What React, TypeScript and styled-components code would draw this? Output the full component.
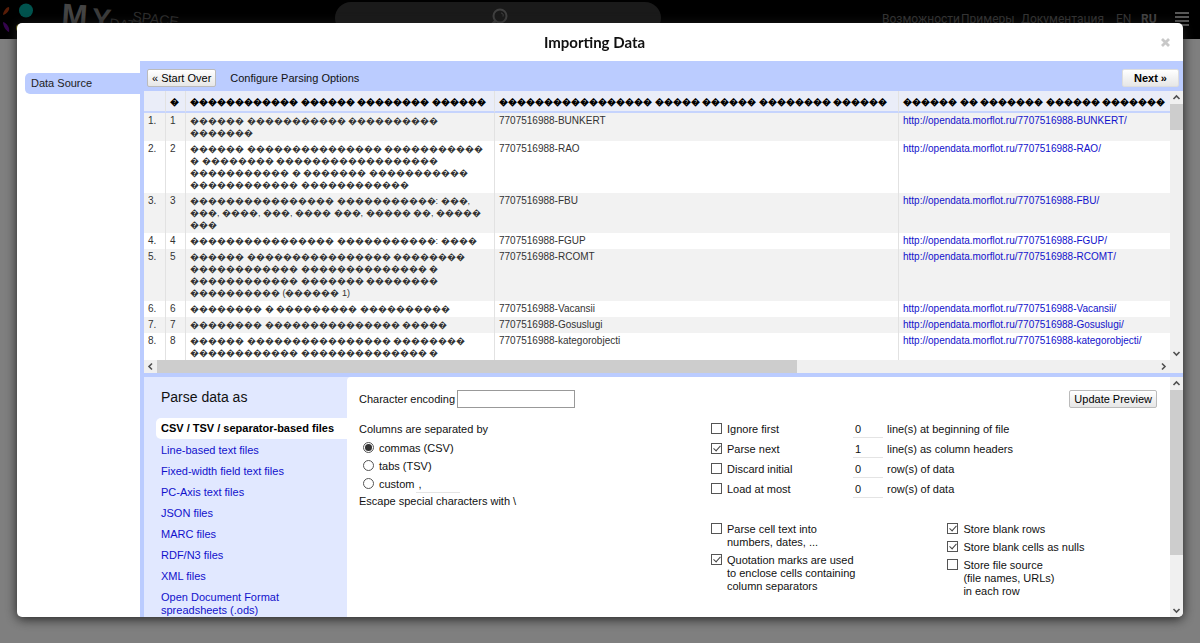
import React from "react";
import styled, { createGlobalStyle, css } from "styled-components";

const GlobalStyle = createGlobalStyle`
  *, *::before, *::after { box-sizing: border-box; }
  html, body { margin: 0; padding: 0; background: #fff; overflow: hidden; }
  body { font: 11px/13px "Liberation Sans", Arial, sans-serif; color: #111; }
  button, input { font: inherit; color: inherit; margin: 0; }
  a { color: #11c; text-decoration: none; }
`;

/* ---------- site header behind the dialog ---------- */

const SiteHeader = styled.header`
  display: flex;
  align-items: flex-start;
  height: 39px;
  padding-right: 11px;
  background: #000;
`;

const Side = styled.div<{ $grow: number; $end?: boolean }>`
  flex: ${(p) => p.$grow} 1 0;
  min-width: 0;
  display: flex;
  justify-content: ${(p) => (p.$end ? "flex-end" : "flex-start")};
`;

const SearchBox = styled.label`
  position: relative;
  flex: 0 0 326px;
  height: 32px;
  margin: 2px 0 0 11px;
  border-radius: 16px;
  background: #343434;
  display: flex;
  justify-content: center;
  svg { margin-top: 6px; }
`;

const SearchInput = styled.input`
  position: absolute;
  inset: 0;
  width: 100%;
  border: 0;
  padding: 0 16px;
  background: transparent;
`;

const SiteNav = styled.nav`
  display: flex;
  padding-top: 10px;
  font: 12px/18px Roboto, sans-serif;
  white-space: nowrap;
`;

const NavLink = styled.a<{ $w: number; $strong?: boolean }>`
  width: ${(p) => p.$w}px;
  color: ${(p) => (p.$strong ? "#888" : "#6a6a6a")};
  font-weight: ${(p) => (p.$strong ? 700 : 400)};
`;

const MenuButton = styled.button`
  border: 0;
  padding: 0;
  background: none;
  line-height: 0;
`;

const Backdrop = styled.div`
  position: fixed;
  inset: 0;
  padding: 23px 17px 26px;
  display: flex;
  background: rgba(0, 0, 0, 0.5);
`;

/* ---------- dialog ---------- */

const Dialog = styled.section`
  flex: 1;
  min-width: 0;
  display: flex;
  flex-direction: column;
  overflow: hidden;
  border-radius: 5px;
  background: #fff;
  box-shadow: 0 2px 12px #222;
`;

const TitleBar = styled.div`
  flex: 0 0 38px;
  display: flex;
  align-items: center;
  padding: 0 12px;
`;

const Title = styled.h1`
  flex: 1;
  margin: 0;
  text-align: center;
  font: 700 15px/20px Lato, sans-serif;
`;

const CloseButton = styled.button`
  width: 11px;
  border: 0;
  padding: 0;
  background: none;
  line-height: 0;
`;

const DialogBody = styled.div`
  flex: 1;
  min-height: 0;
  display: flex;
`;

const Steps = styled.nav`
  flex: 0 0 123px;
  padding: 12px 0 0 8px;
`;

const Step = styled.a`
  display: block;
  padding: 4px 6px;
  border-radius: 5px 0 0 5px;
  background: #bcf;
  color: #222;
`;

const Workspace = styled.div`
  flex: 1;
  min-width: 0;
  display: flex;
  flex-direction: column;
  padding-left: 4px;
  background: #bcf;
`;

const Toolbar = styled.div`
  flex: 0 0 30px;
  display: flex;
  align-items: center;
  gap: 14px;
  padding: 4px 4px 0 3px;
`;

const ToolbarText = styled.span`
  flex: 1;
`;

const Button = styled.button<{ $primary?: boolean }>`
  height: 18px;
  padding: 0 ${(p) => (p.$primary ? 11 : 4)}px;
  border: 1px solid ${(p) => (p.$primary ? "#ddd" : "#bbb")};
  border-radius: 2px;
  background: linear-gradient(#fff, #e6e6e6);
  font-weight: ${(p) => (p.$primary ? 700 : 400)};
  line-height: 16px;
  color: #000;
  white-space: nowrap;
`;

/* ---------- scroll bars ---------- */

const Bar = styled.div<{ $horizontal?: boolean }>`
  display: flex;
  flex-direction: ${(p) => (p.$horizontal ? "row" : "column")};
  background: #f0f0f0;
  ${(p) => (p.$horizontal ? css`height: 13px; padding-right: 13px;` : css`width: 13px;`)}
  flex: none;
`;

const Arrow = styled.span`
  flex: 0 0 13px;
  height: 13px;
  line-height: 0;
`;

const Track = styled.div<{ $horizontal?: boolean }>`
  flex: 1;
  display: flex;
  flex-direction: ${(p) => (p.$horizontal ? "row" : "column")};
`;

const Thumb = styled.div<{ $size: string }>`
  flex: 0 0 ${(p) => p.$size};
  background: #cdcdcd;
`;

const turns = { up: 0, right: 90, down: 180, left: 270 };

function Chevron({ to }: { to: keyof typeof turns }) {
  return (
    <Arrow>
      <svg width="13" height="13" viewBox="0 0 13 13">
        <path
          d="M3.5 8 6.5 5l3 3"
          transform={`rotate(${turns[to]} 6.5 6.5)`}
          fill="none"
          stroke="#505050"
          strokeWidth="1.6"
        />
      </svg>
    </Arrow>
  );
}

function ScrollBar({ horizontal, size }: { horizontal?: boolean; size: string }) {
  return (
    <Bar $horizontal={horizontal} aria-hidden="true">
      <Chevron to={horizontal ? "left" : "up"} />
      <Track $horizontal={horizontal}>
        <Thumb $size={size} />
      </Track>
      <Chevron to={horizontal ? "right" : "down"} />
    </Bar>
  );
}

/* ---------- preview table ---------- */

const Preview = styled.div`
  flex: 282 1 0;
  min-height: 0;
  display: flex;
  flex-direction: column;
`;

const PreviewRow = styled.div`
  flex: 1;
  min-height: 0;
  display: flex;
`;

const Viewport = styled.div`
  flex: 1;
  min-width: 0;
  overflow: hidden;
  background: #fff;
`;

const Table = styled.table`
  width: 125%;
  table-layout: fixed;
  border-collapse: separate;
  border-spacing: 0;
  font-size: 10px;
  line-height: 12px;
  color: #333;

  th, td {
    padding: 2px 4px;
    border-right: 1px solid #e2e2e2;
    text-align: left;
    vertical-align: top;
    white-space: pre;
  }
  th {
    height: 22px;
    padding-top: 5px;
    border-bottom: 2px solid #c6d4fd;
    background: #eaedf8;
    color: #000;
  }
  tbody tr:nth-child(odd) { background: #f2f2f2; }
`;

const Col = styled.col<{ $w?: number }>`
  width: ${(p) => (p.$w ? `${p.$w}px` : "auto")};
`;

const Raw = styled.span<{ $lines: number }>`
  display: block;
  height: ${(p) => p.$lines * 12}px;
  font-size: 9px;
  line-height: 12px;
`;

/* Cells hold text that lost its encoding: "w6" stands for a word of six unreadable letters. */
const garbled = (pattern: string) =>
  pattern.replace(/w(\d+)/g, (_, n) => "\uFFFD".repeat(Number(n)));

function Garbled({ pattern, bold }: { pattern: string; bold?: boolean }) {
  return (
    <Raw as={bold ? "b" : "span"} $lines={pattern.split("\n").length}>
      {garbled(pattern)}
    </Raw>
  );
}

const headers = ["w1", "w12 w6 w8 w6", "w17 w5 w6 w8 w6", "w6 w2 w7 w6 w7"];

const rows: [string, string][] = [
  ["w6 w11 w10\nw7", "BUNKERT"],
  ["w6 w15 w11\nw1 w8 w18\nw11 w1 w7 w11\nw12 w12", "RAO"],
  ["w16 w11: w3,\nw3, w4, w3, w4 w3, w5 w2, w5\nw3", "FBU"],
  ["w16 w11: w4", "FGUP"],
  ["w6 w16 w8\nw12 w14 w1\nw12 w7 w8\nw10 (w6 1)", "RCOMT"],
  ["w8 w1 w9 w10", "Vacansii"],
  ["w8 w15 w5", "Gosuslugi"],
  ["w6 w16 w8\nw12 w14 w1", "kategorobjecti"],
];

/* ---------- parser options ---------- */

const Options = styled.div`
  flex: 240 1 0;
  min-height: 0;
  display: flex;
  margin-top: 4px;
  overflow: hidden;
  background: #e1e8ff;
`;

const Formats = styled.nav`
  flex: 0 0 203px;
  padding: 12px 0 0 12px;
`;

const FormatsTitle = styled.h2`
  margin: 0 0 12px 5px;
  font: 400 14px/17px "Liberation Sans", Arial, sans-serif;
`;

const Format = styled.a<{ $active?: boolean }>`
  display: block;
  padding: 4px 40px 4px 5px;
  ${(p) =>
    p.$active &&
    css`
      margin-bottom: 1px;
      padding-right: 0;
      border-radius: 5px 0 0 5px;
      background: #fff;
      color: #000;
      font-weight: 700;
    `}
`;

const Panel = styled.div`
  flex: 1;
  min-width: 0;
  padding: 12px 13px 0 12px;
  border-radius: 4px 0 0 0;
  background: #fff;
`;

const PanelTop = styled.div`
  display: flex;
  justify-content: space-between;
  align-items: center;
  height: 20px;
`;

const EncodingLabel = styled.label`
  display: flex;
  align-items: center;
  gap: 2px;
`;

const EncodingInput = styled.input`
  width: 118px;
  height: 18px;
  border: 1px solid #999;
  padding: 0 4px;
`;

const PanelGrid = styled.div`
  display: grid;
  grid-template-columns: 352fr 446fr;
  padding-top: 14px;
`;

const Separators = styled.fieldset`
  min-width: 0;
  margin: 0;
  padding: 0;
  border: 0;
  legend { padding: 0; margin-bottom: 4px; }
`;

const Choice = styled.label`
  display: flex;
  align-items: flex-start;
  gap: 5px;
  min-height: 18px;
`;

const LineInput = styled.input<{ $w: number }>`
  display: block;
  width: ${(p) => p.$w}px;
  height: 15px;
  border: 0;
  border-bottom: 1px solid #e4e4e4;
  padding: 0 2px 2px;
  background: transparent;
`;

const RadioRow = styled.div`
  display: flex;
  gap: 2px;
  height: 18px;
  padding: 2px 0 0 4px;
`;

const EscapeNote = styled.div`
  padding-top: 1px;
`;

const boxBase = css`
  appearance: none;
  flex: none;
  width: 11px;
  height: 11px;
  border: 1px solid #555;
  background: #fff;
  display: grid;
  place-items: center;
`;

const Radio = styled.input.attrs({ type: "radio" })`
  ${boxBase}
  border-radius: 50%;
  &:checked::after {
    content: "";
    width: 7px;
    height: 7px;
    border-radius: 50%;
    background: #333;
  }
`;

const Check = styled.input.attrs({ type: "checkbox" })`
  ${boxBase}
  &:checked::after {
    content: "";
    width: 4px;
    height: 7px;
    margin-bottom: 2px;
    border: solid #444;
    border-width: 0 1px 1px 0;
    transform: rotate(42deg);
  }
`;

const Limits = styled.div`
  display: grid;
  grid-template-columns: 142px 34px 1fr;
  grid-auto-rows: 20px;
  margin-bottom: 20px;
`;

const Flags = styled.div`
  display: grid;
  grid-template-columns: 53% 1fr;
`;

const FlagColumn = styled.div`
  display: flex;
  flex-direction: column;
  gap: 5px;
  white-space: pre;
  ${Choice} { min-height: 13px; }
`;

const formats = [
  "CSV / TSV / separator-based files",
  "Line-based text files",
  "Fixed-width field text files",
  "PC-Axis text files",
  "JSON files",
  "MARC files",
  "RDF/N3 files",
  "XML files",
  "Open Document Format spreadsheets (.ods)",
];

const limits = [
  { name: "Ignore first", value: "0", unit: "line(s) at beginning of file", on: false },
  { name: "Parse next", value: "1", unit: "line(s) as column headers", on: true },
  { name: "Discard initial", value: "0", unit: "row(s) of data", on: false },
  { name: "Load at most", value: "0", unit: "row(s) of data", on: false },
];

function Flag({ text, on }: { text: string; on?: boolean }) {
  return (
    <Choice>
      <Check defaultChecked={on} />
      <span>{text}</span>
    </Choice>
  );
}

function Logo() {
  return (
    <svg width="190" height="39" viewBox="0 0 190 39" role="img" aria-label="My Data Space">
      <path d="M3 15c0-3 3-8 6-8 1 3-2 7-6 8z" fill="#b03a10" />
      <circle cx="26" cy="10.5" r="7" fill="#00a79d" />
      <path d="M3 22c4 1 7 6 6 10-3-1-6-6-6-10z" fill="#6a0a9a" />
      <circle cx="20" cy="28" r="4" fill="#d8c820" />
      <g fontFamily="Liberation Sans, Arial, sans-serif">
        <text x="61" y="25" fontSize="31" fontWeight="700" fill="#888" transform="rotate(4 61 25)">M</text>
        <text x="91" y="28" fontSize="29" fontWeight="700" fill="#777" transform="rotate(5 91 28)">Y</text>
        <text x="109" y="28" fontSize="14" fill="#555" transform="rotate(5 109 28)">DATA</text>
        <text x="132" y="21" fontSize="14" fill="#5a5a5a" transform="rotate(7 132 21)">SPACE</text>
      </g>
    </svg>
  );
}

export default function App() {
  return (
    <>
      <GlobalStyle />
      <SiteHeader>
        <Side $grow={38}>
          <Logo />
        </Side>
        <SearchBox>
          <svg width="20" height="22" viewBox="0 0 20 22" fill="none" stroke="#808080">
            <circle cx="12" cy="8" r="6.5" strokeWidth="2" />
            <path d="M7.5 13 3 17.5" strokeWidth="3" />
            <path d="M13 5c2 0 2.5 1.5 2 3.5" strokeWidth="1" />
          </svg>
          <SearchInput type="text" aria-label="Search" />
        </SearchBox>
        <Side $grow={62} $end>
          <SiteNav>
            <NavLink href="#features" $w={79}>Возможности</NavLink>
            <NavLink href="#examples" $w={60}>Примеры</NavLink>
            <NavLink href="#docs" $w={95}>Документация</NavLink>
            <NavLink href="#en" $w={25}>EN</NavLink>
            <NavLink href="#ru" $w={34} $strong>RU</NavLink>
            <MenuButton aria-label="Menu">
              <svg width="14" height="14" viewBox="0 0 14 14" fill="#b0b0b0">
                <path d="M0 0h14v2H0zM0 4h14v2H0zM0 8h14v2H0zM0 12h14v2H0z" />
              </svg>
            </MenuButton>
          </SiteNav>
        </Side>
      </SiteHeader>

      <Backdrop>
        <Dialog role="dialog" aria-label="Importing Data">
          <TitleBar>
            <Title>Importing Data</Title>
            <CloseButton aria-label="Close">
              <svg width="11" height="11" viewBox="0 0 11 11" stroke="#c8c8c8" strokeWidth="2.8">
                <path d="M2 2l7 7M9 2l-7 7" />
              </svg>
            </CloseButton>
          </TitleBar>
          <DialogBody>
            <Steps>
              <Step href="#source">Data Source</Step>
            </Steps>
            <Workspace>
              <Toolbar>
                <Button>« Start Over</Button>
                <ToolbarText>Configure Parsing Options</ToolbarText>
                <Button $primary>Next »</Button>
              </Toolbar>

              <Preview>
                <PreviewRow>
                  <Viewport>
                    <Table>
                      <colgroup>
                        <Col $w={22} />
                        <Col $w={20} />
                        <Col $w={309} />
                        <Col $w={404} />
                        <Col />
                      </colgroup>
                      <thead>
                        <tr>
                          <th />
                          {headers.map((h) => (
                            <th key={h} scope="col">
                              <Garbled pattern={h} bold />
                            </th>
                          ))}
                        </tr>
                      </thead>
                      <tbody>
                        {rows.map(([name, id], i) => (
                          <tr key={id}>
                            <td>{i + 1}.</td>
                            <td>{i + 1}</td>
                            <td>
                              <Garbled pattern={name} />
                            </td>
                            <td>7707516988-{id}</td>
                            <td>
                              <a href={`#${id}`}>http://opendata.morflot.ru/7707516988-{id}/</a>
                            </td>
                          </tr>
                        ))}
                      </tbody>
                    </Table>
                  </Viewport>
                  <ScrollBar size="26px" />
                </PreviewRow>
                <ScrollBar horizontal size="64%" />
              </Preview>

              <Options>
                <Formats>
                  <FormatsTitle>Parse data as</FormatsTitle>
                  {formats.map((f, i) => (
                    <Format key={f} href="#format" $active={i === 0}>
                      {f}
                    </Format>
                  ))}
                </Formats>
                <Panel>
                  <PanelTop>
                    <EncodingLabel>
                      Character encoding
                      <EncodingInput type="text" />
                    </EncodingLabel>
                    <Button>Update Preview</Button>
                  </PanelTop>
                  <PanelGrid>
                    <Separators>
                      <legend>Columns are separated by</legend>
                      <RadioRow>
                        <Choice>
                          <Radio name="separator" defaultChecked />
                          commas (CSV)
                        </Choice>
                      </RadioRow>
                      <RadioRow>
                        <Choice>
                          <Radio name="separator" />
                          tabs (TSV)
                        </Choice>
                      </RadioRow>
                      <RadioRow>
                        <Choice>
                          <Radio name="separator" />
                          custom
                        </Choice>
                        <LineInput $w={44} defaultValue="," aria-label="Custom separator" />
                      </RadioRow>
                      <EscapeNote>Escape special characters with \</EscapeNote>
                    </Separators>
                    <div>
                      <Limits>
                        {limits.map((l) => (
                          <React.Fragment key={l.name}>
                            <Flag text={l.name} on={l.on} />
                            <LineInput $w={30} defaultValue={l.value} aria-label={l.name} />
                            <span>{l.unit}</span>
                          </React.Fragment>
                        ))}
                      </Limits>
                      <Flags>
                        <FlagColumn>
                          <Flag text={"Parse cell text into\nnumbers, dates, ..."} />
                          <Flag on text={"Quotation marks are used\nto enclose cells containing\ncolumn separators"} />
                        </FlagColumn>
                        <FlagColumn>
                          <Flag on text="Store blank rows" />
                          <Flag on text="Store blank cells as nulls" />
                          <Flag text={"Store file source\n(file names, URLs)\nin each row"} />
                        </FlagColumn>
                      </Flags>
                    </div>
                  </PanelGrid>
                </Panel>
                <ScrollBar size="77%" />
              </Options>
            </Workspace>
          </DialogBody>
        </Dialog>
      </Backdrop>
    </>
  );
}
